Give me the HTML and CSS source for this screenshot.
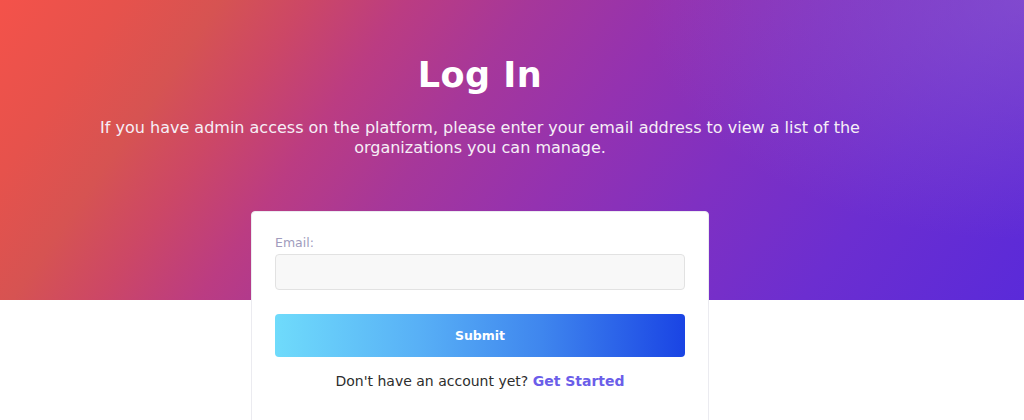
FILE: index.html
```html
<!DOCTYPE html>
<html lang="en">
<head>
<meta charset="utf-8">
<title>Log In</title>
<link rel="stylesheet" href="styles.css">
</head>
<body>
<header class="hero">
  <div class="hero-inner">
    <h1 class="hero-title">Log In</h1>
    <p class="hero-text">If you have admin access on the platform, please enter your email address to view a list of the organizations you can manage.</p>
  </div>
</header>
<main class="main">
  <form class="card">
    <label class="field-label" for="email">Email:</label>
    <input class="field-input" id="email" type="email">
    <button class="submit" type="button">Submit</button>
    <p class="signup">Don't have an account yet? <a class="signup-link" href="#">Get Started</a></p>
  </form>
</main>
</body>
</html>
```

FILE: styles.css
```css
html, body {
  margin: 0;
  padding: 0;
  background: #ffffff;
  font-family: "DejaVu Sans", "Noto Sans", sans-serif;
  overflow: hidden;
}

.hero {
  height: 300px;
  background:
    radial-gradient(ellipse 380px 240px at 100% 0%, rgba(150, 100, 205, 0.5), rgba(150, 100, 205, 0) 100%),
    linear-gradient(125deg, #f4524a 0%, #e6524c 10%, #d65352 18%, #cc4766 25%, #bb3c82 33%, #a6379a 43%, #9432b0 55%, #7f30c2 68%, #6c2ed0 82%, #5a2ad9 100%);
}

.hero-inner {
  width: 960px;
  padding-top: 49px;
  text-align: center;
  color: #ffffff;
}

.hero-title {
  margin: 0;
  font-size: 35px;
  font-weight: 700;
  line-height: 52px;
  letter-spacing: 0.5px;
}

.hero-text {
  width: 820px;
  margin: 17px auto 0;
  font-size: 16px;
  line-height: 20px;
  color: #f6eef6;
}

.main {
  width: 960px;
  display: flex;
  justify-content: center;
}

.card {
  width: 410px;
  margin-top: -89px;
  padding: 23px 23px 40px;
  background: #ffffff;
  border: 1px solid #ebebf0;
  border-radius: 4px;
  display: flex;
  flex-direction: column;
}

.field-label {
  font-size: 12.5px;
  line-height: 16px;
  color: #a09cbd;
  margin-top: 0;
  margin-bottom: 3px;
}

.field-input {
  box-sizing: border-box;
  height: 36px;
  width: 100%;
  margin: 0;
  background: #f8f8f8;
  border: 1px solid #e2e2e2;
  border-radius: 4px;
}

.submit {
  height: 43px;
  margin-top: 24px;
  border: none;
  border-radius: 4px;
  background: linear-gradient(90deg, #6fdbfb 0%, #58b0f6 35%, #3f86ee 65%, #1a44e4 100%);
  color: #ffffff;
  font-family: "DejaVu Sans", "Noto Sans", sans-serif;
  font-size: 12.5px;
  font-weight: 700;
}

.signup {
  margin: 15px 0 0;
  text-align: center;
  font-size: 14px;
  line-height: 18px;
  color: #2d2d2d;
}

.signup-link {
  color: #6b5ee9;
  font-weight: 700;
  text-decoration: none;
}
```
